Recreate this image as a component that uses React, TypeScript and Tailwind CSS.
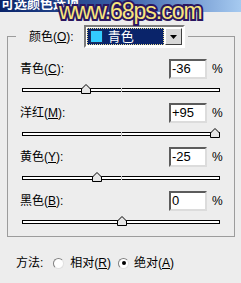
import React from "react"

const FONT = { fontFamily: '"Liberation Sans", "Noto Sans CJK SC", sans-serif' }

const ROWS = [
  { name: "青色", key: "C", value: -36 },
  { name: "洋红", key: "M", value: 95 },
  { name: "黄色", key: "Y", value: -25 },
  { name: "黑色", key: "B", value: 0 },
]

function fmt(v: number) {
  if (v > 0) return `+${v}`
  return `${v}`
}

function Slider({ value }: { value: number }) {
  // track runs 198px, +-100 maps to roughly +-98px from the centre
  const left = 99 + value * 0.98
  return (
    <div className="relative mx-[14px] mt-[9px] mb-[11px] h-[4px] w-[198px] border border-black bg-white">
      <div className="absolute left-[98px] top-[-1px] h-[4px] w-[1px] bg-[#c8c8c8]" />
      <svg
        className="absolute top-[-5px]"
        style={{ left: left - 5.5 }}
        width="10"
        height="10"
        viewBox="0 0 10 10"
      >
        <path d="M0.5 9.5 V5 L5 0.5 L9.5 5 V9.5 Z" fill="#e6e6e6" stroke="#000" strokeWidth="1" />
      </svg>
    </div>
  )
}

function Row({ name, k, value }: { name: string; k: string; value: number }) {
  return (
    <div>
      <div className="flex h-[20px] items-center pl-[12px]">
        <div className="flex-1 text-[12px] text-black">
          {name}(<span className="underline">{k}</span>):
        </div>
        <div className="flex h-[20px] w-[38px] items-center border-2 border-t-[#5c5c5c] border-l-[#5c5c5c] border-r-[#dcdcdc] border-b-[#dcdcdc] bg-white pl-[1px] text-[13px] text-black">
          {fmt(value)}
        </div>
        <div className="w-[27px] pl-[5px] text-[12px] text-black">%</div>
      </div>
      <Slider value={value} />
    </div>
  )
}

function Radio({ checked }: { checked?: boolean }) {
  return (
    <div className="flex h-[11px] w-[11px] items-center justify-center rounded-full border border-t-[#808080] border-l-[#808080] border-r-[#e0e0e0] border-b-[#e0e0e0] bg-white">
      {checked && <div className="h-[4px] w-[4px] rounded-full bg-black" />}
    </div>
  )
}

export default function App() {
  return (
    <div className="relative h-[283px] w-[241px] overflow-hidden bg-[#ededed]" style={FONT}>
      {/* title bar */}
      <div className="h-[12px] overflow-hidden bg-gradient-to-r from-[#0a246a] via-[#3a5fa8] to-[#a6caf0]">
        <div className="mt-[-4px] pl-[1px] text-[13px] font-bold leading-[16px] text-white">可选颜色选项</div>
      </div>

      {/* watermark */}
      <div
        className="absolute left-[59px] top-0 text-[23px] leading-[23px] tracking-[-1px] whitespace-nowrap text-[#f8e57c] [-webkit-text-stroke:4px_#2a1660] [paint-order:stroke_fill]"
        style={{ fontFamily: '"Liberation Sans", sans-serif' }}
      >
        www.68ps.com
      </div>

      <fieldset className="mx-[7px] mt-[13px] w-[227px] border border-[#9c9c9c] pb-[1px]">
        <legend className="ml-[8px] flex items-center pr-[3px]">
          <span className="pl-[13px] text-[12px] text-black">
            颜色(<span className="underline">O</span>):
          </span>
          <div className="ml-[10px] flex h-[23px] w-[101px] border-2 border-t-[#7a7a7a] border-l-[#7a7a7a] border-r-white border-b-white bg-white p-[1px]">
            <div className="flex flex-1 items-center border border-dotted border-[#e9dc92] bg-[#0a246a]">
              <div className="ml-[2px] h-[13px] w-[13px] border border-[#1a3060] bg-[#33ccff]" />
              <span className="ml-[5px] text-[13px] leading-none text-white">青色</span>
            </div>
            <div className="ml-[1px] flex w-[17px] items-center justify-center border border-t-white border-l-white border-r-[#404040] border-b-[#404040] bg-[#d8d8d8]">
              <svg width="7" height="4" viewBox="0 0 7 4">
                <path d="M0 0 H7 L3.5 4 Z" fill="#000" />
              </svg>
            </div>
          </div>
        </legend>
        <div className="pt-[11px]">
          {ROWS.map((r) => (
            <Row key={r.key} name={r.name} k={r.key} value={r.value} />
          ))}
        </div>
      </fieldset>

      <div className="mt-[16px] flex h-[20px] items-center pl-[16px] text-[12px] text-black">
        <span>方法:</span>
        <div className="ml-[10px]">
          <Radio />
        </div>
        <span className="ml-[6px]">
          相对(<span className="underline">R</span>)
        </span>
        <div className="ml-[7px]">
          <Radio checked />
        </div>
        <span className="ml-[5px]">
          绝对(<span className="underline">A</span>)
        </span>
      </div>
    </div>
  )
}
